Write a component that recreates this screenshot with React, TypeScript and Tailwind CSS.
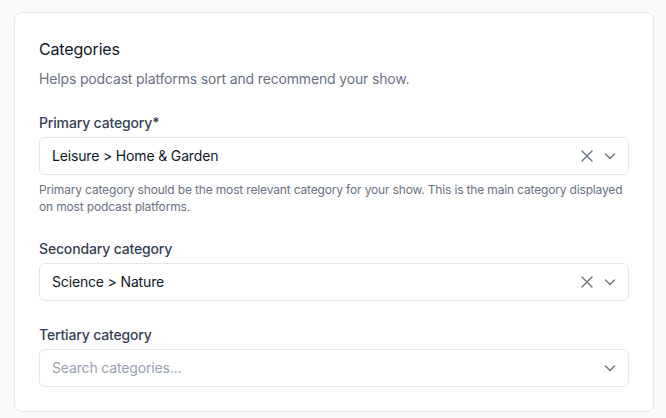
import React from "react";

function XIcon() {
  return (
    <svg width="20" height="20" viewBox="0 0 20 20" fill="none" stroke="currentColor" strokeWidth="1.4" strokeLinecap="round">
      <path d="M5 5l10 10M15 5L5 15" />
    </svg>
  );
}

function ChevronIcon() {
  return (
    <svg width="20" height="20" viewBox="0 0 20 20" fill="none" stroke="currentColor" strokeWidth="1.4" strokeLinecap="round" strokeLinejoin="round">
      <path d="M5.5 8l4.5 4.5L14.5 8" />
    </svg>
  );
}

function Select({ value, placeholder }: { value?: string; placeholder?: string }) {
  return (
    <div className="mt-1 flex h-[38px] items-center rounded-md border border-gray-200 bg-white pl-3 pr-2">
      <span className={value ? "flex-1 text-sm text-gray-900" : "flex-1 text-sm text-gray-400"}>
        {value ?? placeholder}
      </span>
      <div className="flex items-center gap-[3px] text-gray-500">
        {value && <XIcon />}
        <ChevronIcon />
      </div>
    </div>
  );
}

export default function App() {
  return (
    <div
      className="min-h-[418px] bg-gray-50 px-[14px] pt-3 tracking-[-0.01em]"
      style={{ fontFamily: "Inter, 'Noto Sans', sans-serif" }}
    >
      <div className="w-[640px] rounded-lg border border-gray-200 bg-white p-6">
        <h2 className="text-base leading-6 font-normal text-gray-900">Categories</h2>
        <p className="mt-2 text-sm text-gray-500">Helps podcast platforms sort and recommend your show.</p>

        <div className="mt-6">
          <label className="block text-sm font-medium text-gray-700">Primary category*</label>
          <Select value="Leisure > Home & Garden" />
          <p className="mt-1.5 text-xs leading-[17px] text-gray-500">
            Primary category should be the most relevant category for your show. This is the main category displayed on most podcast platforms.
          </p>
        </div>

        <div className="mt-6">
          <label className="block text-sm font-medium text-gray-700">Secondary category</label>
          <Select value="Science > Nature" />
        </div>

        <div className="mt-6">
          <label className="block text-sm font-medium text-gray-700">Tertiary category</label>
          <Select placeholder="Search categories..." />
        </div>
      </div>
    </div>
  );
}
